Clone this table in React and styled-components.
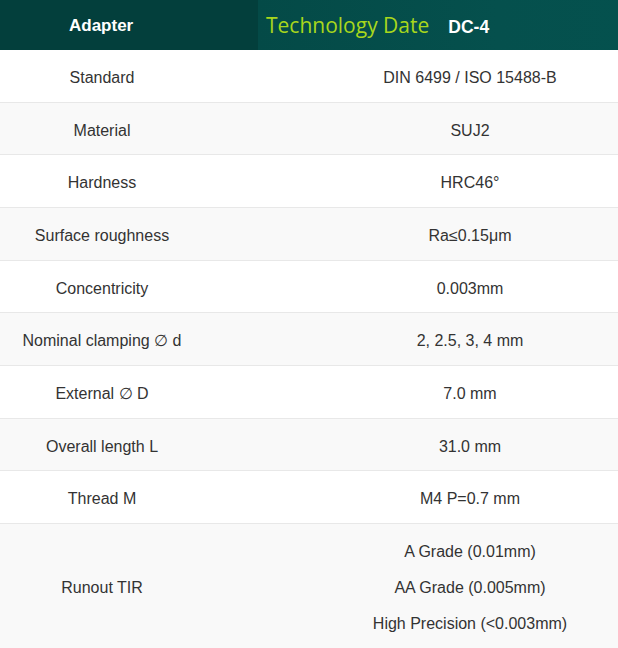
import React from 'react';
import styled, { createGlobalStyle } from 'styled-components';

const GlobalStyle = createGlobalStyle`
  html, body {
    margin: 0;
    padding: 0;
    background: #fff;
    overflow: hidden;
  }
`

const Page = styled.div`
  width: 618px;
  overflow: hidden;
  font-family: "Liberation Sans", Arial, sans-serif;
`

const Table = styled.div`
  width: 736px;
`

const Header = styled.div`
  display: grid;
  grid-template-columns: 258px 1fr;
  height: 50px;
`

const HeadCell = styled.div`
  display: flex;
  align-items: center;
  box-sizing: border-box;
  background: ${p => p.$dark ? '#033f3c' : 'linear-gradient(90deg, #044a47 0%, #05504d 50%, #04524f 100%)'};
  padding: 2px 0 0 ${p => p.$dark ? '69px' : '8px'};
  color: #fff;
  font-weight: bold;
  font-size: 17px;
`

const HeadText = styled.div`
  line-height: 24px;
`

const Title = styled.span`
  font-family: "Open Sans", "Noto Sans", sans-serif;
  font-weight: normal;
  font-size: 21px;
  color: #a8d71c;
  margin-right: 19px;
`

const Code = styled.span`
  font-size: 17.5px;
`

const Row = styled.div`
  display: grid;
  grid-template-columns: 204px 532px;
  align-items: center;
  background: ${p => p.$alt ? '#f9f9f9' : '#fff'};
  border-bottom: 1px solid #e8e8e8;
`

const Cell = styled.div`
  padding: 15px 0 11px;
  text-align: center;
  font-size: 16px;
  line-height: 25.67px;
  color: #333;
  white-space: nowrap;
`

const Line = styled.p`
  margin: 0;

  & + & {
    margin-top: 10.4px;
  }
`

const specs = [
  ['Standard', ['DIN 6499 / ISO 15488-B']],
  ['Material', ['SUJ2']],
  ['Hardness', ['HRC46°']],
  ['Surface roughness', ['Ra≤0.15μm']],
  ['Concentricity', ['0.003mm']],
  ['Nominal clamping ∅ d', ['2, 2.5, 3, 4 mm']],
  ['External ∅ D', ['7.0 mm']],
  ['Overall length L', ['31.0 mm']],
  ['Thread M', ['M4 P=0.7 mm']],
  ['Runout TIR', ['A Grade (0.01mm)', 'AA Grade (0.005mm)', 'High Precision (<0.003mm)']],
]

const App = () => {
  return (
    <>
      <GlobalStyle />
      <Page>
        <Table>
          <Header>
            <HeadCell $dark>Adapter</HeadCell>
            <HeadCell>
              <HeadText>
                <Title>Technology Date</Title>
                <Code>DC-4</Code>
              </HeadText>
            </HeadCell>
          </Header>
          {specs.map(([label, values], i) => (
            <Row key={label} $alt={i % 2 === 1}>
              <Cell>{label}</Cell>
              <Cell>
                {values.map(v => <Line key={v}>{v}</Line>)}
              </Cell>
            </Row>
          ))}
        </Table>
      </Page>
    </>
  )
}

export default App;
